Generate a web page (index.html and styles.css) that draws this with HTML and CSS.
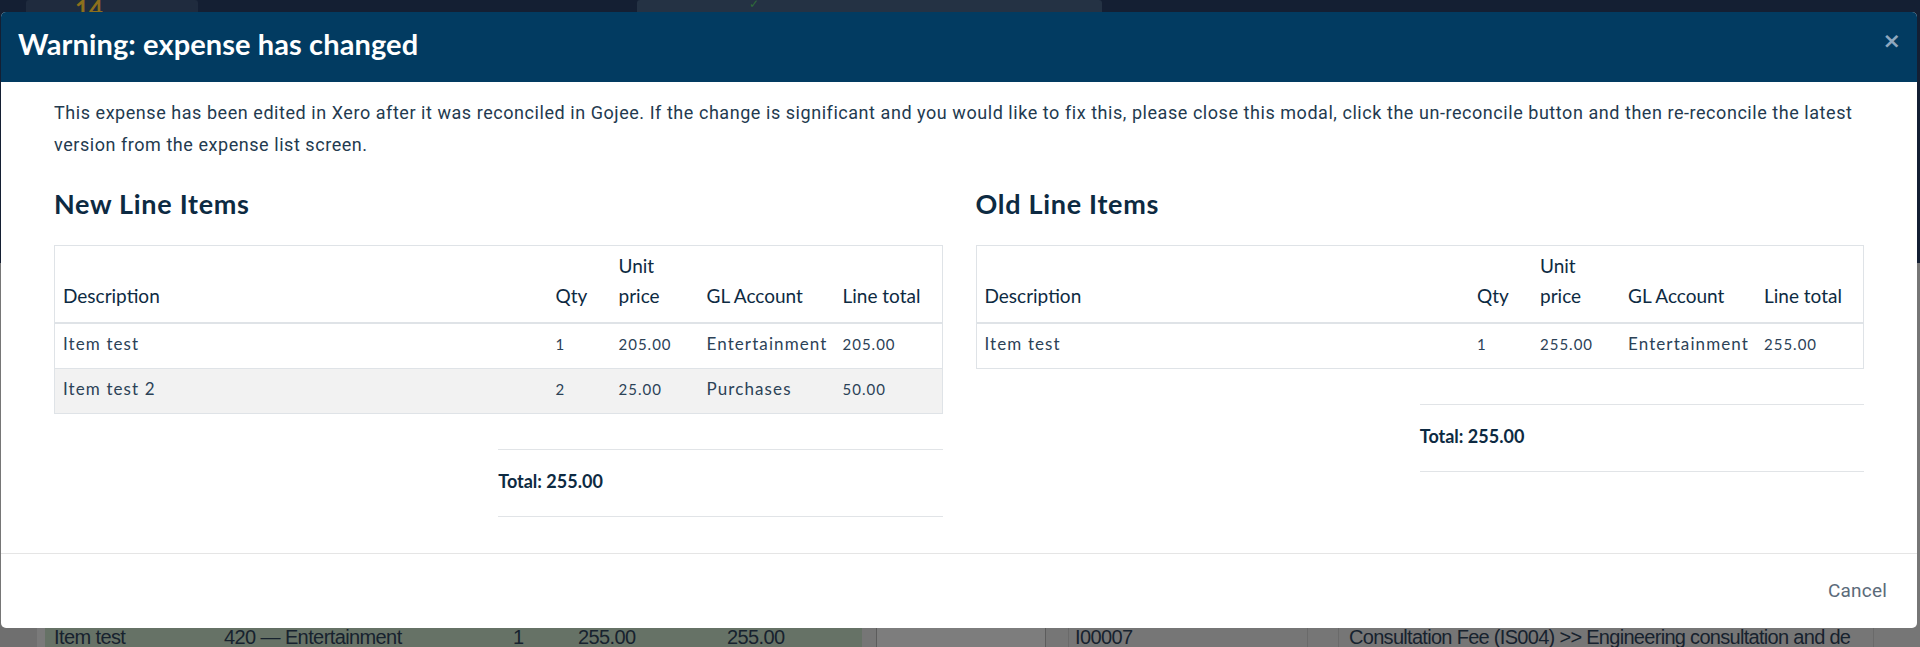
FILE: index.html
```html
<!DOCTYPE html>
<html>
<head>
<meta charset="utf-8">
<link rel="stylesheet" href="styles.css">
</head>
<body>
<div class="page">
  <div class="app-top">
    <div class="app-tile"><span class="tile-num">14</span></div>
    <div class="app-tile wide"><span class="tile-mark">✓</span></div>
  </div>
  <div class="app-content">
    <div class="bg-row">
      <div class="bg-gutter"></div>
      <div class="bg-line">
        <span class="c1">Item test</span>
        <span class="c2">420 — Entertainment</span>
        <span class="c3">1</span>
        <span class="c4">255.00</span>
        <span class="c5">255.00</span>
      </div>
      <div class="bg-input"></div>
      <div class="bg-ref">I00007</div>
      <div class="bg-desc">Consultation Fee (IS004) &gt;&gt; Engineering consultation and de</div>
    </div>
  </div>
</div>

<div class="modal">
  <div class="modal-header">
    <h1 class="modal-title">Warning: expense has changed</h1>
    <span class="modal-close">×</span>
  </div>
  <div class="modal-body">
    <p class="intro">This expense has been edited in Xero after it was reconciled in Gojee. If the change is significant and you would like to fix this, please close this modal, click the un-reconcile button and then re-reconcile the latest version from the expense list screen.</p>
    <div class="cols">
      <section class="col">
        <h2 class="col-title">New Line Items</h2>
        <table class="items">
          <thead>
            <tr><th class="w-desc">Description</th><th class="w-qty">Qty</th><th class="w-price">Unit price</th><th class="w-gl">GL Account</th><th class="w-total">Line total</th></tr>
          </thead>
          <tbody>
            <tr><td>Item test</td><td class="num">1</td><td class="num">205.00</td><td>Entertainment</td><td class="num">205.00</td></tr>
            <tr class="alt"><td>Item test 2</td><td class="num">2</td><td class="num">25.00</td><td>Purchases</td><td class="num">50.00</td></tr>
          </tbody>
        </table>
        <div class="total-wrap"><div class="total">Total: 255.00</div></div>
      </section>
      <section class="col">
        <h2 class="col-title">Old Line Items</h2>
        <table class="items">
          <thead>
            <tr><th class="w-desc">Description</th><th class="w-qty">Qty</th><th class="w-price">Unit price</th><th class="w-gl">GL Account</th><th class="w-total">Line total</th></tr>
          </thead>
          <tbody>
            <tr><td>Item test</td><td class="num">1</td><td class="num">255.00</td><td>Entertainment</td><td class="num">255.00</td></tr>
          </tbody>
        </table>
        <div class="total-wrap"><div class="total">Total: 255.00</div></div>
      </section>
    </div>
  </div>
  <div class="modal-footer">
    <span class="cancel">Cancel</span>
  </div>
</div>
</body>
</html>
```

FILE: styles.css
```css
html, body {
  margin: 0;
  padding: 0;
}
body {
  width: 1920px;
  height: 647px;
  overflow: hidden;
  position: relative;
  font-family: Lato, "Open Sans", sans-serif;
  background: #757575;
}

/* background app (dimmed by backdrop) */
.page {
  display: flex;
  flex-direction: column;
  height: 647px;
}
.app-top {
  flex: none;
  height: 263px;
  background: #141f33;
  display: flex;
  align-items: flex-start;
  padding-left: 26px;
  gap: 439px;
}
.app-tile {
  width: 172px;
  height: 30px;
  background: #1f2b3e;
  border-radius: 3px;
}
.app-tile.wide {
  width: 465px;
  background: #243244;
}
.tile-num {
  display: block;
  padding: 0 0 0 49px;
  margin-top: -6px;
  color: #8d6f1c;
  font-size: 24px;
  font-weight: 700;
}
.tile-mark {
  display: block;
  padding-left: 112px;
  margin-top: -4px;
  color: #2f6a3a;
  font-size: 12px;
}
.app-content {
  flex: 1;
  min-height: 0;
  background: #767676;
  padding-top: 357px;
}
.bg-row {
  display: flex;
  height: 40px;
  font-family: "Liberation Sans", sans-serif;
  font-size: 20px;
  color: #17222e;
}
.bg-gutter {
  width: 37px;
  background: #6f6f6f;
  border-right: 8px solid #7a7a7a;
}
.bg-line {
  width: 817px;
  background: #667266;
  display: flex;
  align-items: flex-start;
  padding-top: 6px;
  box-sizing: border-box;
  letter-spacing: -0.6px;
}
.bg-line span { display: block; }
.c1 { margin-left: 9px; width: 170px; }
.c2 { width: 289px; }
.c3 { width: 65px; }
.c4 { width: 149px; }
.c5 { width: 100px; }
.bg-input {
  margin-left: 14px;
  width: 168px;
  height: 30px;
  border: 1px solid #5c5c5c;
  border-radius: 3px;
  background: #7d7d7d;
}
.bg-ref {
  margin-left: 22px;
  width: 232px;
  padding: 6px 0 0 6px;
  border-left: 1px solid #6a6a6a;
  border-right: 1px solid #6a6a6a;
  letter-spacing: -0.6px;
}
.bg-desc {
  margin-left: 30px;
  padding: 6px 0 0 10px;
  width: 524px;
  border-left: 1px solid #6a6a6a;
  border-right: 1px solid #6a6a6a;
  white-space: nowrap;
  overflow: hidden;
  letter-spacing: -0.7px;
}

/* modal (overlays the page) */
.modal {
  position: absolute;
  top: 12px;
  left: 1px;
  width: 1916px;
  height: 616px;
  background: #ffffff;
  border-radius: 5px;
  overflow: hidden;
  display: flex;
  flex-direction: column;
}
.modal-header {
  height: 70px;
  flex: none;
  background: #023b61;
  display: flex;
  align-items: center;
  justify-content: space-between;
  padding: 0 17px;
}
.modal-title {
  margin: -8px 0 0 0;
  color: #ffffff;
  font-family: Lato, sans-serif;
  font-weight: 700;
  font-size: 29px;
  letter-spacing: 0.1px;
}
.modal-close {
  color: #8fa8bf;
  font-family: "DejaVu Sans", sans-serif;
  font-size: 22px;
  font-weight: 700;
  margin-right: -1px;
  margin-top: -14px;
}
.modal-body {
  flex: 1;
  padding: 15px 53px 0 53px;
  color: #24394d;
}
.intro {
  margin: 0;
  font-family: Roboto, sans-serif;
  font-size: 18px;
  line-height: 32px;
  letter-spacing: 0.55px;
  color: #233a4f;
}
.cols {
  display: flex;
  gap: 33px;
  margin-top: 27px;
}
.col {
  flex: 1;
  min-width: 0;
}
.col-title {
  margin: 0 0 25px 0;
  font-family: Lato, sans-serif;
  font-size: 27px;
  line-height: 32px;
  font-weight: 700;
  letter-spacing: 0.7px;
  color: #0d2a42;
}
.items {
  width: 100%;
  border-collapse: collapse;
  border: 1px solid #dfe3e7;
  table-layout: fixed;
}
.items th {
  text-align: left;
  vertical-align: bottom;
  font-weight: 400;
  font-size: 19px;
  line-height: 30px;
  color: #0d2a42;
  padding: 5px 8px 11px 8px;
  border-bottom: 2px solid #dfe3e7;
  white-space: nowrap;
}
.items th.w-price { white-space: normal; }
.w-desc { width: auto; }
.w-qty { width: 47px; }
.w-price { width: 72px; }
.w-gl { width: 120px; }
.w-total { width: 91px; }
.items td {
  font-size: 17px;
  line-height: 28px;
  padding: 6px 8px 10px 8px;
  color: #2c4257;
  letter-spacing: 1.1px;
  border-top: 1px solid #dfe3e7;
  white-space: nowrap;
}
.items td.num {
  font-size: 15px;
  letter-spacing: 1px;
}
.items tr.alt td {
  background: #f2f2f2;
}
.total-wrap {
  display: flex;
  justify-content: flex-end;
  margin-top: 35px;
}
.total {
  width: 50%;
  border-top: 1px solid #e1e4e7;
  border-bottom: 1px solid #e1e4e7;
  padding: 18px 0 21px 0;
  font-size: 18px;
  line-height: 27px;
  font-weight: 700;
  color: #0d2a42;
}
.modal-footer {
  flex: none;
  height: 74px;
  border-top: 1px solid #e5e5e5;
  display: flex;
  align-items: center;
  justify-content: flex-end;
  padding-right: 30px;
}
.cancel {
  font-family: Roboto, sans-serif;
  font-size: 19px;
  color: #5b6b7a;
  letter-spacing: 0.2px;
  margin-top: -2px;
}
```
